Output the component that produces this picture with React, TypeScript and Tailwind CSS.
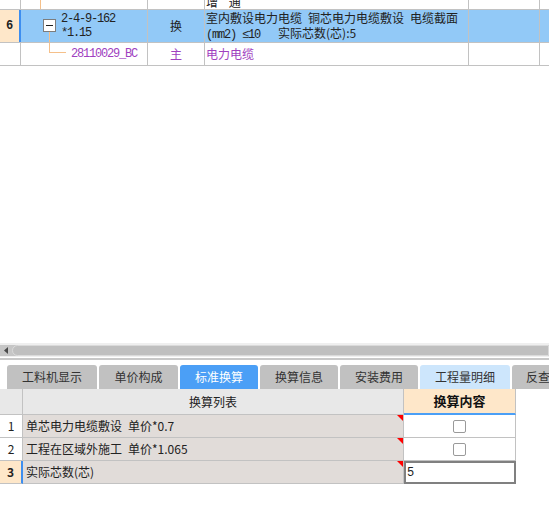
import React from 'react';

const GRID = 'border-[#c2c2c2]';
const MONO = "font-['Liberation_Mono',monospace] text-[12px] tracking-[-1.2px]";

const tabs = [
  { label: '工料机显示', w: 'w-[90px]', tone: 'gray' },
  { label: '单价构成', w: 'w-[79px]', tone: 'gray' },
  { label: '标准换算', w: 'w-[78px]', tone: 'active' },
  { label: '换算信息', w: 'w-[78px]', tone: 'gray' },
  { label: '安装费用', w: 'w-[78px]', tone: 'gray' },
  { label: '工程量明细', w: 'w-[90px]', tone: 'light' },
  { label: '反查', w: 'w-[52px]', tone: 'gray' },
];

const toneClass: Record<string, string> = {
  gray: 'bg-[#c1c1c1] text-[#333]',
  active: 'bg-[#4b9ff6] text-white',
  light: 'bg-[#cde6fc] text-[#333]',
};

const rows = [
  { no: '1', text: '单芯电力电缆敷设\u2002单价*0.7', kind: 'check' },
  { no: '2', text: '工程在区域外施工\u2002单价*1.065', kind: 'check' },
  { no: '3', text: '实际芯数(芯)', kind: 'input' },
];

const Checkbox = () => (
  <span className="block w-[13px] h-[13px] rounded-[2px] border border-[#9a9a9a] bg-white" />
);

const App = () => {
  return (
    <div className="w-[549px] h-[511px] flex flex-col bg-white overflow-hidden text-[12px] text-[#222] font-['Noto_Sans_CJK_SC',sans-serif]">
      {/* top grid */}
      <div className="flex flex-col">
        {/* partial row */}
        <div className={`flex h-[10px] border-b ${GRID}`}>
          <div className={`w-[21px] border-r ${GRID}`} />
          <div className={`relative w-[127px] border-r ${GRID}`}>
            <span className="absolute left-[19px] top-0 h-full w-px bg-[#f5c08a]" />
          </div>
          <div className={`w-[57px] border-r ${GRID}`} />
          <div className={`w-[264px] border-r ${GRID} overflow-hidden`}>
            <span className="relative -top-[7px] pl-[1px] leading-[14px] whitespace-pre">增    通</span>
          </div>
          <div className={`w-[71px] border-r ${GRID}`} />
          <div className="flex-1" />
        </div>

        {/* selected row 6 */}
        <div className={`flex h-[33px] border-b ${GRID} bg-[#92c9f7]`}>
          <div className="w-[21px] bg-[#fee7c9] border-r-2 border-r-[#3d8ef0] flex items-center justify-center font-bold font-['Liberation_Mono',monospace]">
            6
          </div>
          <div className={`relative w-[127px] border-r ${GRID} flex items-center`}>
            <span className="absolute left-[22px] top-[9px] w-[13px] h-[13px] bg-white border border-[#7d7d7d] flex items-center justify-center">
              <span className="block w-[7px] h-px bg-[#222]" />
            </span>
            <span className="absolute left-[28px] top-[22px] h-[10px] w-px bg-[#f5c08a]" />
            <div className={`pl-[40px] leading-[14px] ${MONO}`}>
              <div>2-4-9-162</div>
              <div>*1.15</div>
            </div>
          </div>
          <div className={`w-[57px] border-r ${GRID} flex items-center justify-center`}>换</div>
          <div className={`w-[264px] border-r ${GRID} flex items-center pl-[1px]`}>
            <div className="leading-[15px] whitespace-pre">
              <div>室内敷设电力电缆{'\u2002'}铜芯电力电缆敷设{'\u2002'}电缆截面</div>
              <div>
                <span className={MONO}>(mm2) ≤10   </span>实际芯数(芯):5
              </div>
            </div>
          </div>
          <div className={`w-[71px] border-r ${GRID}`} />
          <div className="flex-1" />
        </div>

        {/* child row */}
        <div className={`flex h-[23px] border-b ${GRID} text-[#a040c0]`}>
          <div className={`w-[21px] border-r ${GRID}`} />
          <div className={`relative w-[127px] border-r ${GRID} flex items-center`}>
            <span className="absolute left-[28px] top-0 h-[10px] w-px bg-[#f5c08a]" />
            <span className="absolute left-[28px] top-[9px] h-px w-[17px] bg-[#f5c08a]" />
            <span className={`pl-[50px] ${MONO}`}>28110029_BC</span>
          </div>
          <div className={`w-[57px] border-r ${GRID} flex items-center justify-center`}>主</div>
          <div className={`w-[264px] border-r ${GRID} flex items-center pl-[1px]`}>电力电缆</div>
          <div className={`w-[71px] border-r ${GRID}`} />
          <div className="flex-1" />
        </div>
      </div>

      <div className="flex-1" />

      {/* horizontal scrollbar */}
      <div className="h-[14px] bg-[#efefef] pt-[2px]">
        <div className="h-[11px] flex bg-[#c6c6c6]">
          <div className="w-[12px] flex items-center justify-center">
            <svg width="5" height="7" viewBox="0 0 5 7">
              <path d="M4 0 L0 3.5 L4 7 Z" fill="#4a4a4a" />
            </svg>
          </div>
          <div className="flex-1 rounded-l-full border border-[#dadada] bg-[#bfbfbf]" />
        </div>
      </div>
      <div className="h-px" />
      <div className="h-[2px] bg-[#c8c8c8]" />
      <div className="h-[5px]" />

      {/* tabs */}
      <div className="h-[24px] flex gap-[2px] pl-[7px]">
        {tabs.map((t) => (
          <div
            key={t.label}
            className={`${t.w} shrink-0 rounded-t-[3px] flex items-center justify-center ${toneClass[t.tone]}`}
          >
            {t.label}
          </div>
        ))}
      </div>

      {/* conversion table */}
      <div className="flex h-[26px]">
        <div className={`w-[23px] bg-[#e8e8e8] border-r border-b ${GRID}`} />
        <div className={`w-[381px] bg-[#e8e8e8] border-r border-b ${GRID} flex items-center justify-center`}>
          换算列表
        </div>
        <div className={`w-[112px] bg-[#fee7c9] border-r ${GRID} border-b-2 border-b-[#4b9ff6] flex items-center justify-center font-bold text-[13px] text-[#111]`}>
          换算内容
        </div>
      </div>
      {rows.map((r) => {
        const current = r.kind === 'input';
        return (
          <div key={r.no} className="flex h-[23px]">
            <div
              className={`w-[23px] border-b ${GRID} flex items-center justify-center ${
                current ? 'bg-[#fee7c9] border-r-2 border-r-[#3d8ef0] font-bold' : 'bg-white border-r'
              }`}
            >
              {r.no}
            </div>
            <div className={`relative w-[381px] bg-[#e1dcd9] border-r border-b ${GRID} flex items-center pl-[3px] whitespace-pre`}>
              {r.text}
              <span className="absolute top-0 right-0 w-0 h-0 border-t-[6px] border-t-[#ff0000] border-l-[6px] border-l-transparent" />
            </div>
            {current ? (
              <div className="w-[112px] border-2 border-[#808080] flex items-center pl-[1px] font-['Liberation_Mono',monospace]">
                5
              </div>
            ) : (
              <div className={`w-[112px] border-r border-b ${GRID} flex items-center justify-center`}>
                <Checkbox />
              </div>
            )}
          </div>
        );
      })}
      <div className="h-[27px]" />
    </div>
  );
};

export default App;
